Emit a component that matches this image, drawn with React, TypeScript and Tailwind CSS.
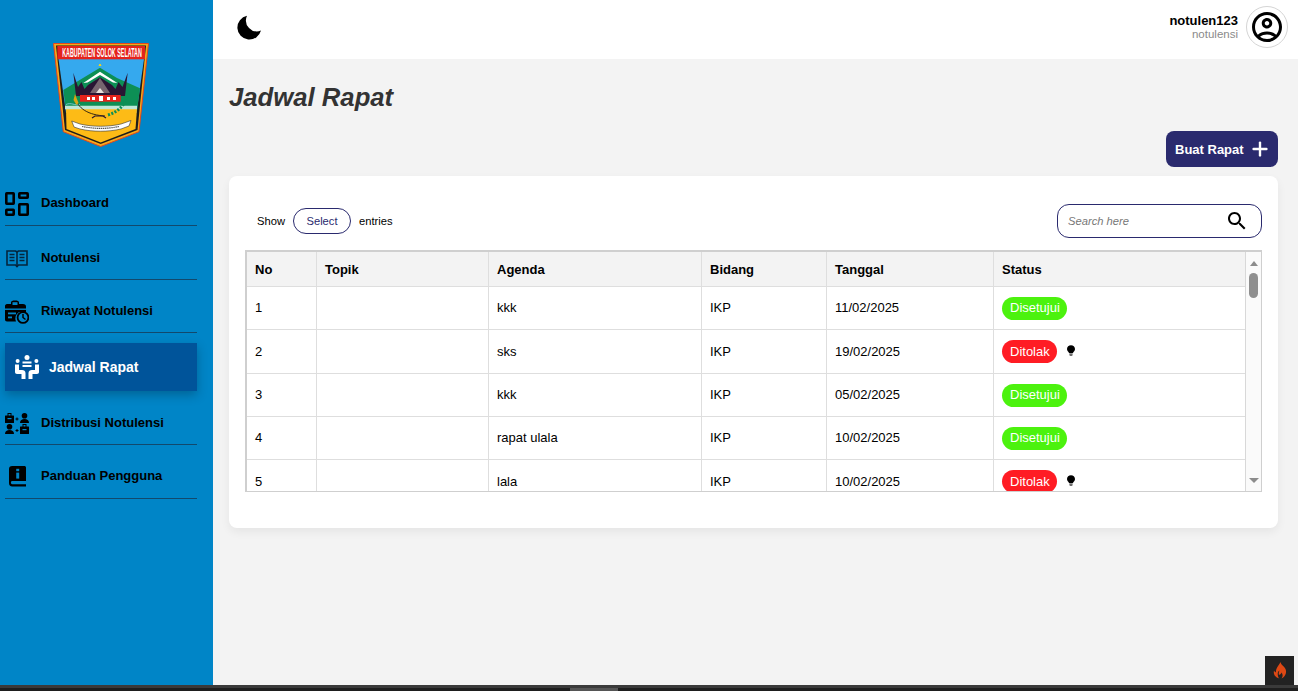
import { ReactNode } from 'react';
import { Plus } from 'lucide-react';

const rows = [
  { no: 1, agenda: 'kkk', bidang: 'IKP', tanggal: '11/02/2025', status: 'Disetujui', height: 'h-[43px]' },
  { no: 2, agenda: 'sks', bidang: 'IKP', tanggal: '19/02/2025', status: 'Ditolak', height: 'h-[44px]' },
  { no: 3, agenda: 'kkk', bidang: 'IKP', tanggal: '05/02/2025', status: 'Disetujui', height: 'h-[43px]' },
  { no: 4, agenda: 'rapat ulala', bidang: 'IKP', tanggal: '10/02/2025', status: 'Disetujui', height: 'h-[43px]' },
  { no: 5, agenda: 'lala', bidang: 'IKP', tanggal: '10/02/2025', status: 'Ditolak', height: 'h-[44px]' },
];

const Logo = () => (
  <svg width="96" height="104" viewBox="0 0 96 104">
    <path d="M0.500 0.500H95.500L86 88.700L47.700 103.500L10.300 88.700Z" fill="#f7a81b" stroke="#e2471c" strokeWidth="1" />
    <path d="M3 2.500H93L84.500 87L47.700 101L12 87Z" fill="#1d1d1b" />
    <path d="M5.500 16H91L83.500 70H13Z" fill="#35a9ee" />
    <path d="M10.300 47L30 35L47 24.700L64 35L87 45.300L84 68H13Z" fill="#0d8f55" />
    <path d="M13 66H84L82.500 86L47.700 99.500L13.500 86Z" fill="#fdbb16" />
    <rect x="4.300" y="3" width="87.700" height="13.300" fill="#e5231c" />
    <text transform="translate(49 13.800) scale(0.43 1)" textAnchor="middle" fill="#fff" fontFamily="'Liberation Sans',sans-serif" fontWeight="700" fontSize="12.500">KABUPATEN SOLOK SELATAN</text>
    <path d="M47 21L48 22.500H46Z" fill="#f7d21b" stroke="#f7d21b" />
    <path d="M30.300 40L47 28.700L64.300 40L60 39.500L47 32L34.500 39.500Z" fill="#fff" />
    <path d="M20.300 29.700L25 44L28.500 39L31.500 46L35 42L47 34.300L59 42L62.500 46L65.500 39L69.500 44L74.700 29.700L72 53H23Z" fill="#2a1533" />
    <path d="M37 50L47 35L57 50Z" fill="#77656f" />
    <path d="M43 50L47 45L51 50Z" fill="#e8e2de" />
    <rect x="27" y="52" width="40.700" height="6.700" fill="#e5231c" />
    <rect x="34" y="54" width="3" height="3" fill="#fff" />
    <rect x="39" y="54" width="3" height="3" fill="#fff" />
    <rect x="46" y="53" width="4" height="5" fill="#fff" />
    <rect x="54" y="54" width="3" height="3" fill="#fff" />
    <rect x="60" y="54" width="3" height="3" fill="#fff" />
    <path d="M12 64.500H84" stroke="#bfe6d8" strokeWidth="3.500" />
    <path d="M13 61.500C18 59 22 63 27 61.500" stroke="#8fd3e8" strokeWidth="0.800" fill="none" />
    <path d="M22 53C24 66 36 72 52 73" stroke="#3a2a10" strokeWidth="1" fill="none" />
    <path d="M22 51L25.500 60L23.500 62L20.500 57Z" fill="#d9a514" />
    <path d="M39 75L42 73H50L53 75" stroke="#2a1533" strokeWidth="1.200" fill="none" />
    <path d="M55 72C65 69 72 62 73.700 53" stroke="#0d8f55" strokeWidth="3" strokeDasharray="2 1.500" fill="none" />
    <path d="M18.700 78L27 81C40 84 55 84 68 81L78 77.500L76 83L68 86C55 89 40 89 27 86L21 84Z" fill="#fff" stroke="#333" strokeWidth="0.600" />
    <path d="M29 83.500C42 86 54 86 66 83.500" stroke="#555" strokeWidth="1.200" strokeDasharray="1.500 0.600" fill="none" />
  </svg>
);

const IconDashboard = () => (
  <svg width="24" height="24" viewBox="0 0 24 24" fill="none" stroke="#000" strokeWidth="2.600">
    <rect x="1.300" y="1.300" width="7.400" height="10.400" rx="0.400" />
    <rect x="14.300" y="1.300" width="8.400" height="4.400" rx="0.400" />
    <rect x="14.300" y="12.300" width="8.400" height="10.400" rx="0.400" />
    <rect x="1.300" y="17.800" width="7.400" height="4.900" rx="0.400" />
  </svg>
);

const IconBook = () => (
  <svg width="22" height="20" viewBox="0 0 22 20" fill="none" stroke="#04253c" strokeWidth="1.600">
    <path d="M1 2H9.500L11 3L12.500 2H21V16H12.500L11 17.500L9.500 16H1Z" />
    <path d="M11 3V18" />
    <path d="M3.500 5.500H8.500M3.500 8.500H8.500M3.500 11.500H8.500M13.500 5.500H18.500M13.500 8.500H18.500M13.500 11.500H18.500" />
  </svg>
);

const IconHistory = () => (
  <svg width="24" height="24" viewBox="0 0 24 24">
    <path d="M2 4H6V2.500C6 1 7.500 .5 10 .5S14 1 14 2.500V4H18C20 4 21 5 21 6.500V12H14A8 8 0 0 0 11 21.500H2C.8 21.500 0 20.500 0 19.500V6C0 5 .8 4 2 4Z" fill="#000" />
    <rect x="7.500" y="2.200" width="5" height="2.800" fill="#0085c7" />
    <rect x="0" y="8.500" width="21" height="1.400" fill="#0085c7" />
    <rect x="3" y="12.500" width="8" height="1.800" fill="#0085c7" />
    <rect x="3" y="16.500" width="4" height="1.800" fill="#0085c7" />
    <circle cx="18" cy="17.500" r="5.400" fill="#0085c7" stroke="#000" strokeWidth="1.800" />
    <path d="M18 14V17.500L20.500 19.500" stroke="#000" strokeWidth="1.500" fill="none" />
  </svg>
);

const IconMeeting = () => (
  <svg width="24" height="24" viewBox="0 0 24 24" fill="#fff">
    <circle cx="12" cy="2.500" r="2.500" />
    <circle cx="2.600" cy="6" r="2" />
    <circle cx="21.400" cy="6" r="2" />
    <rect x="7.500" y="6.500" width="9" height="2" />
    <rect x="7.500" y="10" width="9" height="2" />
    <path d="M0 9.500H4V15H7C9 15 10.500 16 10.500 18V24H6.500V19H2C.8 19 0 18 0 17Z" />
    <path d="M24 9.500H20V15H17C15 15 13.500 16 13.500 18V24H17.500V19H22C23.200 19 24 18 24 17Z" />
  </svg>
);

const IconDistribusi = () => (
  <svg width="24" height="21" viewBox="0 0 24 21" fill="#000">
    <rect x="0" y="2.500" width="9" height="7.500" rx="0.500" />
    <rect x="3" y="0.500" width="3" height="3" fill="none" stroke="#000" />
    <rect x="2.500" y="5" width="4" height="1.200" fill="#0085c7" />
    <circle cx="19.500" cy="2.800" r="2.800" />
    <path d="M15 10C15 7 17 6 19.500 6S24 7 24 10Z" />
    <circle cx="4.500" cy="13.800" r="2.800" />
    <path d="M0 21C0 18 2 17 4.500 17S9 18 9 21Z" />
    <rect x="15" y="13.500" width="9" height="7.500" rx="0.500" />
    <rect x="18" y="11.500" width="3" height="3" fill="none" stroke="#000" />
    <rect x="17.500" y="16" width="4" height="1.200" fill="#0085c7" />
    <path d="M10.500 6H13.500M12 4.500V7.500M10.500 17.500H13.500M12 16V19" stroke="#000" strokeWidth="1" />
  </svg>
);

const IconGuide = () => (
  <svg width="17" height="21" viewBox="0 0 16 21" preserveAspectRatio="none">
    <path d="M3 0H14.500C15.300 0 16 .7 16 1.500V15H3C2 15 1.800 16 1.800 16.500S2 18.200 3 18.200H16V20.500H3C1 20.500 0 19 0 17V3C0 1 1 0 3 0Z" fill="#000" />
    <rect x="6.800" y="2.800" width="2.800" height="2.400" fill="#0085c7" />
    <rect x="6.800" y="6.600" width="2.800" height="6" fill="#0085c7" />
  </svg>
);

const Bulb = () => (
  <svg width="8" height="12" viewBox="0 0 9 13" className="ml-[10px] -mt-[2px]">
    <path d="M4.500 0C7 0 9 1.800 9 4.200C9 6.200 7.400 7 6.600 9H2.400C1.600 7 0 6.200 0 4.200C0 1.800 2 0 4.500 0Z" fill="#000" />
    <rect x="2.800" y="9.400" width="3.400" height="2.600" rx="0.800" fill="#6b6b6b" />
  </svg>
);

const MenuItem = ({ icon, label, height }: { icon: ReactNode; label: string; height: string }) => (
  <div className={`ml-[5px] w-[192px] flex items-center border-b border-[#12496d] ${height}`}>
    <div className="w-[36px] flex justify-center shrink-0 pr-[12px]">{icon}</div>
    <span className="text-[13px] font-bold text-[#000] leading-[16px] pb-[2px]">{label}</span>
  </div>
);

const Badge = ({ status }: { status: string }) => (
  <span
    className={`inline-flex items-center h-[23px] pl-[8px] pr-[7px] rounded-full text-[13px] text-white ${
      status === 'Disetujui' ? 'bg-[#4cf20e]' : 'bg-[#ff1c24]'
    }`}
  >
    {status}
  </span>
);

const cell = 'pl-[8px] border-r border-b border-[#dedede]';

const App = () => {
  return (
    <div className="w-[1298px] h-[691px] overflow-hidden bg-[#1e1e1e] font-['Liberation_Sans',Arial,sans-serif]">
      <div className="flex h-[685px]">
        <aside className="w-[213px] shrink-0 bg-[#0085c7] flex flex-col">
          <div className="pt-[43px] pl-[53px] h-[188px]">
            <Logo />
          </div>
          <MenuItem icon={<IconDashboard />} label="Dashboard" height="h-[38px] pb-[5px]" />
          <div className="h-[13px]" />
          <MenuItem icon={<IconBook />} label="Notulensi" height="h-[41px]" />
          <div className="h-[12px]" />
          <MenuItem icon={<IconHistory />} label="Riwayat Notulensi" height="h-[41px]" />
          <div className="h-[10px]" />
          <div className="ml-[5px] w-[192px] h-[48px] flex items-center bg-[#00549a] shadow-[0_4px_10px_rgba(0,0,0,0.25)]">
            <div className="w-[44px] flex justify-center shrink-0 pl-[4px] pr-[4px]">
              <IconMeeting />
            </div>
            <span className="text-[14px] font-bold text-white">Jadwal Rapat</span>
          </div>
          <div className="h-[12px]" />
          <MenuItem icon={<IconDistribusi />} label="Distribusi Notulensi" height="h-[42px]" />
          <div className="h-[12px]" />
          <MenuItem icon={<IconGuide />} label="Panduan Pengguna" height="h-[42px] pb-[2px]" />
        </aside>

        <div className="flex-1 flex flex-col bg-[#f3f3f3] relative">
          <header className="h-[59px] bg-white flex items-center justify-between pl-[24px] pr-[10px] shrink-0">
            <svg width="25" height="25" viewBox="0 0 25 25" className="mt-[-5px]">
              <path d="M10 .8A12 12 0 1 0 24 15.600A11 11 0 0 1 10 .8Z" fill="#000" />
            </svg>
            <div className="flex items-center gap-[8px] mt-[-5px]">
              <div className="text-right">
                <div className="text-[13px] font-bold leading-[15px] text-[#000]">notulen123</div>
                <div className="text-[11.5px] leading-[13px] text-[#8a8a8a]">notulensi</div>
              </div>
              <div className="w-[42px] h-[42px] rounded-full border border-[#d5d5d5] flex items-center justify-center">
                <svg width="36" height="36" viewBox="0 0 24 24" fill="#000">
                  <path d="M12 2C6.480 2 2 6.480 2 12s4.480 10 10 10 10-4.480 10-10S17.520 2 12 2zM7.350 18.500C8.660 17.560 10.260 17 12 17s3.340.56 4.650 1.500C15.340 19.440 13.740 20 12 20s-3.340-.56-4.650-1.500zm10.790-1.380C16.450 15.800 14.320 15 12 15s-4.450.8-6.140 2.120C4.700 15.730 4 13.950 4 12c0-4.420 3.580-8 8-8s8 3.580 8 8c0 1.950-.7 3.730-1.860 5.120z" />
                  <path d="M12 6c-1.930 0-3.500 1.570-3.500 3.500S10.070 13 12 13s3.500-1.570 3.500-3.500S13.930 6 12 6zm0 5c-.83 0-1.500-.67-1.500-1.500S11.170 8 12 8s1.500.67 1.500 1.500S12.830 11 12 11z" />
                </svg>
              </div>
            </div>
          </header>

          <main className="flex-1 pl-[16px] pr-[20px] flex flex-col">
            <h1 className="mt-[22px] text-[25.7px] leading-[32px] font-bold italic text-[#333]">Jadwal Rapat</h1>
            <div className="flex justify-end mt-[18px]">
              <button className="h-[36px] w-[112px] rounded-[8px] bg-[#2a2a6e] text-white text-[13px] font-bold flex items-center pl-[9px] gap-[5px]">
                <span className="pt-[1px]">Buat Rapat</span>
                <Plus size={22} strokeWidth={2.6} />
              </button>
            </div>
            <section className="mt-[9px] h-[352px] bg-white rounded-[8px] shadow-[0_4px_10px_rgba(0,0,0,0.06)] px-[16px] pt-[28px]">
              <div className="flex items-center justify-between h-[34px] pl-[12px]">
                <div className="flex items-center text-[11.2px] text-[#000]">
                  <span>Show</span>
                  <span className="mx-[8px] w-[58px] h-[26px] rounded-full border border-[#2a2a6e] flex items-center justify-center text-[#2a2a6e]">Select</span>
                  <span>entries</span>
                </div>
                <div className="w-[205px] h-[34px] rounded-[12px] border border-[#2a2a6e] flex items-center justify-between pl-[10px] pr-[12px]">
                  <span className="text-[11.2px] italic text-[#777]">Search here</span>
                  <svg width="24" height="24" viewBox="0 0 24 24" fill="#000">
                    <path d="M15.500 14h-.79l-.28-.27C15.410 12.590 16 11.110 16 9.500 16 5.910 13.090 3 9.500 3S3 5.910 3 9.500 5.910 16 9.500 16c1.610 0 3.090-.59 4.230-1.570l.27.28v.79l5 4.990L20.490 19l-4.990-5zm-6 0C7.010 14 5 11.990 5 9.500S7.010 5 9.500 5 14 7.010 14 9.500 11.990 14 9.500 14z" />
                  </svg>
                </div>
              </div>

              <div className="mt-[12px] h-[242px] border-2 border-[#cfcfcf] border-r border-b flex overflow-hidden">
                <div className="flex-1 min-w-0 overflow-hidden">
                  <table className="w-full table-fixed border-separate border-spacing-0 text-[13px] text-[#000]">
                    <thead>
                      <tr className="h-[35px] bg-[#f3f3f3] text-left font-bold">
                        <th className={`w-[70px] pt-[1px] ${cell}`}>No</th>
                        <th className={`w-[172px] pt-[1px] ${cell}`}>Topik</th>
                        <th className={`w-[213px] pt-[1px] ${cell}`}>Agenda</th>
                        <th className={`w-[125px] pt-[1px] ${cell}`}>Bidang</th>
                        <th className={`w-[167px] pt-[1px] ${cell}`}>Tanggal</th>
                        <th className="pl-[8px] pt-[1px] border-b border-[#dedede]">Status</th>
                      </tr>
                    </thead>
                    <tbody>
                      {rows.map((r) => (
                        <tr key={r.no} className={r.height}>
                          <td className={cell}>{r.no}</td>
                          <td className={cell}></td>
                          <td className={cell}>{r.agenda}</td>
                          <td className={cell}>{r.bidang}</td>
                          <td className={cell}>{r.tanggal}</td>
                          <td className="pl-[8px] border-b border-[#dedede]">
                            <div className="flex items-center">
                              <Badge status={r.status} />
                              {r.status === 'Ditolak' && <Bulb />}
                            </div>
                          </td>
                        </tr>
                      ))}
                    </tbody>
                  </table>
                </div>
                <div className="w-[16px] shrink-0 bg-[#fafafa] border-l border-[#d8d8d8] flex flex-col items-center pt-[9px]">
                  <div className="w-0 h-0 border-x-[4.5px] border-x-transparent border-b-[5px] border-b-[#8c8c8c]" />
                  <div className="w-[9px] h-[25px] rounded-full bg-[#8f8f8f] mt-[7px]" />
                  <div className="flex-1" />
                  <div className="w-0 h-0 border-x-[5px] border-x-transparent border-t-[5px] border-t-[#8c8c8c] mb-[8px]" />
                </div>
              </div>
            </section>
          </main>

          <div className="absolute right-[4px] bottom-0 w-[29px] h-[29px] bg-[#222222] flex items-center justify-center">
            <svg width="14" height="17" viewBox="0 0 14 17">
              <path d="M7.500 0C8 3 11 4 12.500 7C14 10.500 12.500 14.500 8.500 16.500C10 14.500 10 12.500 8.500 10.500C8 12 7 12.500 6 13C5.500 11.500 5.800 10 6.500 8.500C5 9 4.500 11 4.800 13C5 14.500 5.500 16 6.500 16.500C2.500 15.500 0 12.500 1 8.500C1.500 9.500 2 10 3 10.500C2.500 6.500 5.500 4 7.500 0Z" fill="#dd4814" />
            </svg>
          </div>
        </div>
      </div>
      <div className="h-[3px] bg-[#3a3a3a]" />
      <div className="h-[3px] pl-[570px]">
        <div className="w-[48px] h-full bg-[#555555]" />
      </div>
    </div>
  );
};

export default App;
